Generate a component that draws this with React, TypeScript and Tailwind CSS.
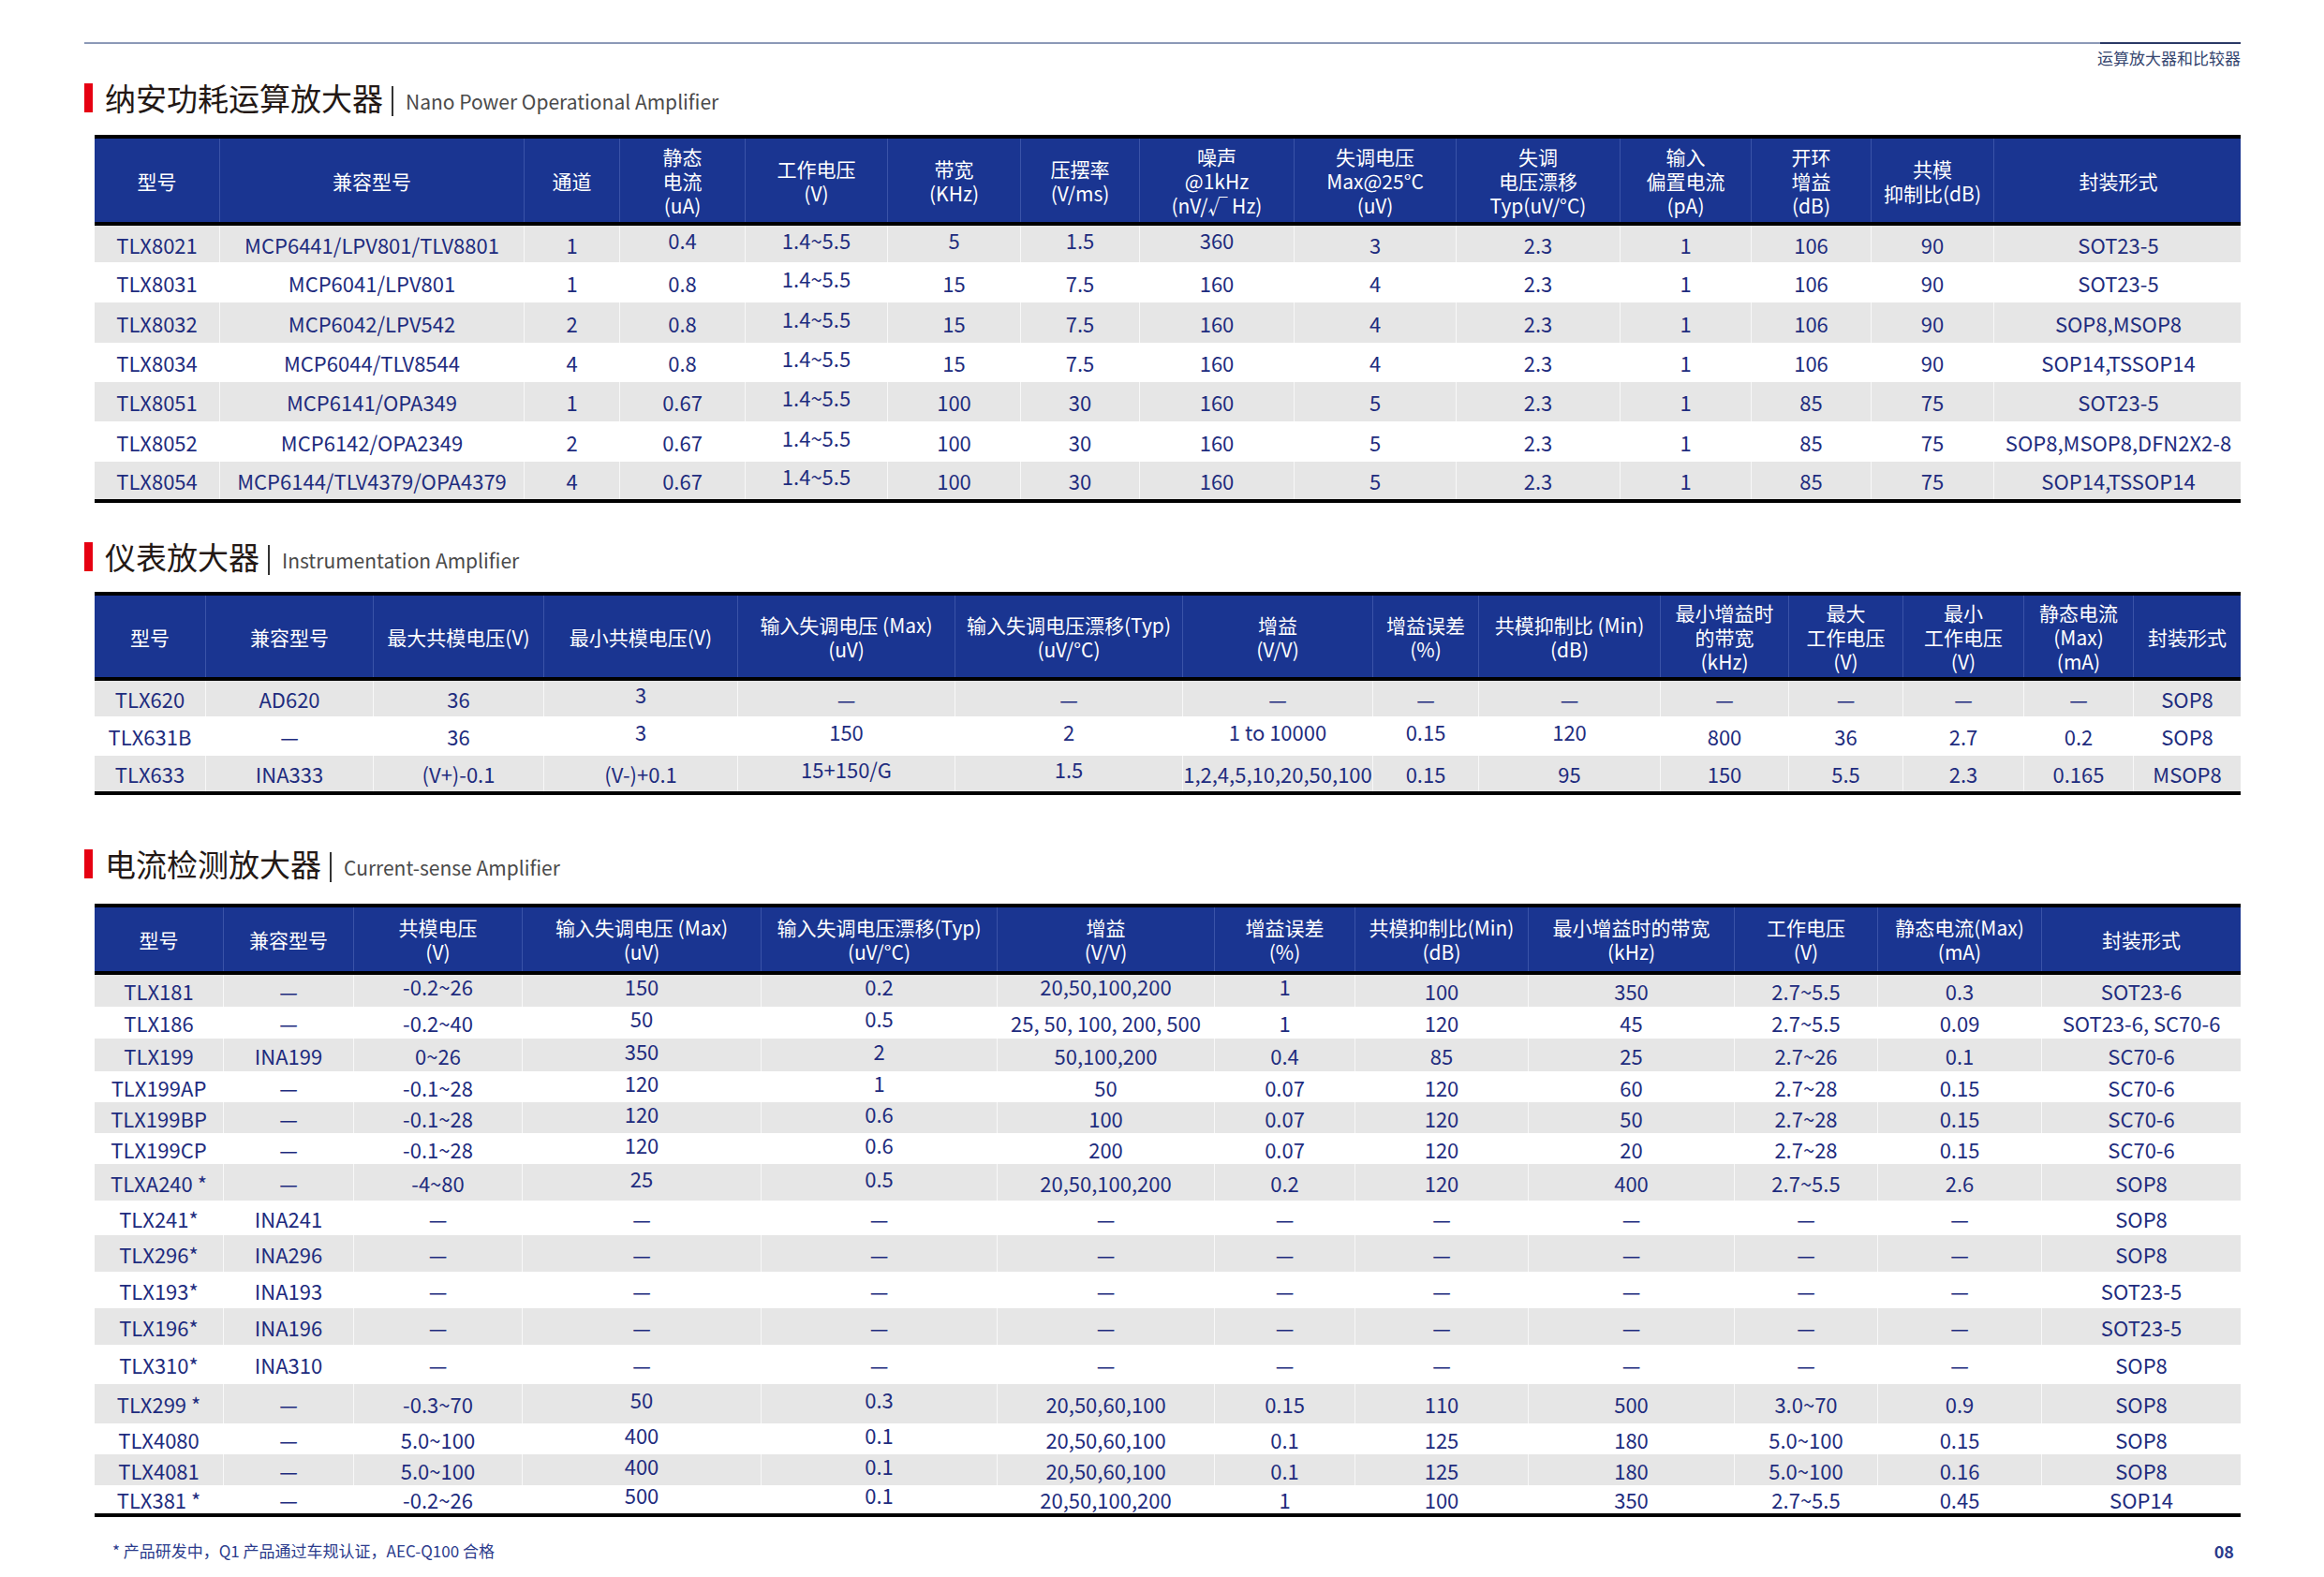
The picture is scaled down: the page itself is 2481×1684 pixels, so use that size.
import clsx from 'clsx'

type Row = { h: string; cells: string[] }

const T1_COLS = 'grid-cols-[134px_325px_102px_134px_152px_142px_127px_165px_173px_175px_140px_128px_131px_265px]'
const T2_COLS = 'grid-cols-[119px_179px_182px_207px_232px_243px_203px_113px_194px_137px_122px_129px_117px_114px]'
const T3_COLS = 'grid-cols-[138px_139px_180px_255px_252px_232px_150px_185px_220px_153px_175px_212px]'

// "^" in front of a value = printed a bit higher in the source sheet
const opampHeaders = [
  '型号', '兼容型号', '通道', '静态\n电流\n(uA)', '工作电压\n(V)', '带宽\n(KHz)', '压摆率\n(V/ms)',
  '噪声\n@1kHz\n(nV/√ Hz)', '失调电压\nMax@25°C\n(uV)', '失调\n电压漂移\nTyp(uV/°C)', '输入\n偏置电流\n(pA)',
  '开环\n增益\n(dB)', '共模\n抑制比(dB)', '封装形式',
]

const opampRows: Row[] = [
  { h: 'h-[39px]', cells: ['TLX8021', 'MCP6441/LPV801/TLV8801', '1', '^0.4', '^1.4~5.5', '^5', '^1.5', '^360', '3', '2.3', '1', '106', '90', 'SOT23-5'] },
  { h: 'h-[43px]', cells: ['TLX8031', 'MCP6041/LPV801', '1', '0.8', '^1.4~5.5', '15', '7.5', '160', '4', '2.3', '1', '106', '90', 'SOT23-5'] },
  { h: 'h-[43px]', cells: ['TLX8032', 'MCP6042/LPV542', '2', '0.8', '^1.4~5.5', '15', '7.5', '160', '4', '2.3', '1', '106', '90', 'SOP8,MSOP8'] },
  { h: 'h-[42px]', cells: ['TLX8034', 'MCP6044/TLV8544', '4', '0.8', '^1.4~5.5', '15', '7.5', '160', '4', '2.3', '1', '106', '90', 'SOP14,TSSOP14'] },
  { h: 'h-[42px]', cells: ['TLX8051', 'MCP6141/OPA349', '1', '0.67', '^1.4~5.5', '100', '30', '160', '5', '2.3', '1', '85', '75', 'SOT23-5'] },
  { h: 'h-[43px]', cells: ['TLX8052', 'MCP6142/OPA2349', '2', '0.67', '^1.4~5.5', '100', '30', '160', '5', '2.3', '1', '85', '75', 'SOP8,MSOP8,DFN2X2-8'] },
  { h: 'h-[40px]', cells: ['TLX8054', 'MCP6144/TLV4379/OPA4379', '4', '0.67', '^1.4~5.5', '100', '30', '160', '5', '2.3', '1', '85', '75', 'SOP14,TSSOP14'] },
]

const inaHeaders = [
  '型号', '兼容型号', '最大共模电压(V)', '最小共模电压(V)', '输入失调电压 (Max)\n(uV)', '输入失调电压漂移(Typ)\n(uV/°C)',
  '增益\n(V/V)', '增益误差\n(%)', '共模抑制比 (Min)\n(dB)', '最小增益时\n的带宽\n(kHz)', '最大\n工作电压\n(V)',
  '最小\n工作电压\n(V)', '静态电流\n(Max)\n(mA)', '封装形式',
]

const inaRows: Row[] = [
  { h: 'h-[38px]', cells: ['TLX620', 'AD620', '36', '^3', '—', '—', '—', '—', '—', '—', '—', '—', '—', 'SOP8'] },
  { h: 'h-[42px]', cells: ['TLX631B', '—', '36', '^3', '^150', '^2', '^1 to 10000', '^0.15', '^120', '800', '36', '2.7', '0.2', 'SOP8'] },
  { h: 'h-[38px]', cells: ['TLX633', 'INA333', '(V+)-0.1', '(V-)+0.1', '^15+150/G', '^1.5', '1,2,4,5,10,20,50,100', '0.15', '95', '150', '5.5', '2.3', '0.165', 'MSOP8'] },
]

const csaHeaders = [
  '型号', '兼容型号', '共模电压\n(V)', '输入失调电压 (Max)\n(uV)', '输入失调电压漂移(Typ)\n(uV/°C)', '增益\n(V/V)',
  '增益误差\n(%)', '共模抑制比(Min)\n(dB)', '最小增益时的带宽\n(kHz)', '工作电压\n(V)', '静态电流(Max)\n(mA)', '封装形式',
]

const dashes = ['—', '—', '—', '—', '—', '—', '—', '—', '—']

const csaRows: Row[] = [
  { h: 'h-[34px]', cells: ['TLX181', '—', '^-0.2~26', '^150', '^0.2', '^20,50,100,200', '^1', '100', '350', '2.7~5.5', '0.3', 'SOT23-6'] },
  { h: 'h-[34px]', cells: ['TLX186', '—', '-0.2~40', '^50', '^0.5', '25, 50, 100, 200, 500', '1', '120', '45', '2.7~5.5', '0.09', 'SOT23-6, SC70-6'] },
  { h: 'h-[35px]', cells: ['TLX199', 'INA199', '0~26', '^350', '^2', '50,100,200', '0.4', '85', '25', '2.7~26', '0.1', 'SC70-6'] },
  { h: 'h-[33px]', cells: ['TLX199AP', '—', '-0.1~28', '^120', '^1', '50', '0.07', '120', '60', '2.7~28', '0.15', 'SC70-6'] },
  { h: 'h-[33px]', cells: ['TLX199BP', '—', '-0.1~28', '^120', '^0.6', '100', '0.07', '120', '50', '2.7~28', '0.15', 'SC70-6'] },
  { h: 'h-[33px]', cells: ['TLX199CP', '—', '-0.1~28', '^120', '^0.6', '200', '0.07', '120', '20', '2.7~28', '0.15', 'SC70-6'] },
  { h: 'h-[39px]', cells: ['TLXA240 *', '—', '-4~80', '^25', '^0.5', '20,50,100,200', '0.2', '120', '400', '2.7~5.5', '2.6', 'SOP8'] },
  { h: 'h-[37px]', cells: ['TLX241*', 'INA241', ...dashes, 'SOP8'] },
  { h: 'h-[39px]', cells: ['TLX296*', 'INA296', ...dashes, 'SOP8'] },
  { h: 'h-[39px]', cells: ['TLX193*', 'INA193', ...dashes, 'SOT23-5'] },
  { h: 'h-[39px]', cells: ['TLX196*', 'INA196', ...dashes, 'SOT23-5'] },
  { h: 'h-[42px]', cells: ['TLX310*', 'INA310', ...dashes, 'SOP8'] },
  { h: 'h-[42px]', cells: ['TLX299 *', '—', '-0.3~70', '^50', '^0.3', '20,50,60,100', '0.15', '110', '500', '3.0~70', '0.9', 'SOP8'] },
  { h: 'h-[33px]', cells: ['TLX4080', '—', '5.0~100', '^400', '^0.1', '20,50,60,100', '0.1', '125', '180', '5.0~100', '0.15', 'SOP8'] },
  { h: 'h-[33px]', cells: ['TLX4081', '—', '5.0~100', '^400', '^0.1', '20,50,60,100', '0.1', '125', '180', '5.0~100', '0.16', 'SOP8'] },
  { h: 'h-[30px]', cells: ['TLX381 *', '—', '-0.2~26', '^500', '^0.1', '20,50,100,200', '1', '100', '350', '2.7~5.5', '0.45', 'SOP14'] },
]

const SectionTitle = ({ cn, en, className }: { cn: string; en: string; className: string }) => (
  <div className={clsx('flex h-[40px] items-center', className)}>
    <div className="h-[31px] w-[9px] bg-[#e60012]" />
    <div className="ml-[13px] text-[33px] leading-[40px] text-[#231815]">{cn}</div>
    <div className="ml-[9px] mt-[8px] h-[32px] w-[2px] bg-[#333]" />
    <div className="ml-[13px] mt-[8px] text-[21px] leading-[30px] text-[#4a4a4a]">{en}</div>
  </div>
)

// header height passed in includes its 4px black bottom rule
const DataTable = ({ cols, headH, headers, rows, className }: { cols: string; headH: string; headers: string[]; rows: Row[]; className: string }) => (
  <div className={clsx('ml-[11px] border-y-4 border-black', className)}>
    <div className={clsx('grid border-b-4 border-black bg-[#1a3591] text-white', cols, headH)}>
      {headers.map((h, i) => (
        <div key={i} className="flex items-center justify-center whitespace-pre-line border-r border-[#3a53a8] text-center text-[21px] leading-[26px] last:border-r-0">
          {h}
        </div>
      ))}
    </div>
    {rows.map((r, ri) => (
      <div key={ri} className={clsx('grid text-[22px] leading-[20px] text-[#1e2c7e]', cols, r.h, ri % 2 === 0 ? 'bg-[#e6e6e6]' : 'bg-white')}>
        {r.cells.map((v, ci) => {
          const up = v.startsWith('^')
          return (
            <div key={ci} className={clsx('flex items-center justify-center whitespace-nowrap border-r border-white/70 last:border-r-0', up && 'pb-[10px]')}>
              {up ? v.slice(1) : v}
            </div>
          )
        })}
      </div>
    ))}
  </div>
)

export default function App() {
  return (
    <div className="h-[1684px] w-[2481px] bg-white pl-[90px] pr-[89px] pt-[45px] font-['Noto_Sans_CJK_SC','Noto_Sans',sans-serif]">
      <div className="flex h-[2px]">
        <div className="flex-1 bg-[#8c99b7]" />
        <div className="w-[150px] bg-[#2b3a66]" />
      </div>
      <div className="mt-[5px] text-right text-[17px] leading-[20px] text-[#34446e]">运算放大器和比较器</div>

      <SectionTitle className="mt-[12px]" cn="纳安功耗运算放大器" en="Nano Power Operational Amplifier" />
      <DataTable className="mt-[20px]" cols={T1_COLS} headH="h-[93px]" headers={opampHeaders} rows={opampRows} />

      <SectionTitle className="mt-[37px]" cn="仪表放大器" en="Instrumentation Amplifier" />
      <DataTable className="mt-[18px]" cols={T2_COLS} headH="h-[91px]" headers={inaHeaders} rows={inaRows} />

      <SectionTitle className="mt-[53px]" cn="电流检测放大器" en="Current-sense Amplifier" />
      <DataTable className="mt-[23px]" cols={T3_COLS} headH="h-[72px]" headers={csaHeaders} rows={csaRows} />

      <div className="mt-[26px] flex items-center justify-between pl-[30px] pr-[7px] text-[17px] leading-[20px] text-[#2b3b8c]">
        <span>* 产品研发中，Q1 产品通过车规认证，AEC-Q100 合格</span>
        <span className="text-[18px] font-bold">08</span>
      </div>
    </div>
  )
}
